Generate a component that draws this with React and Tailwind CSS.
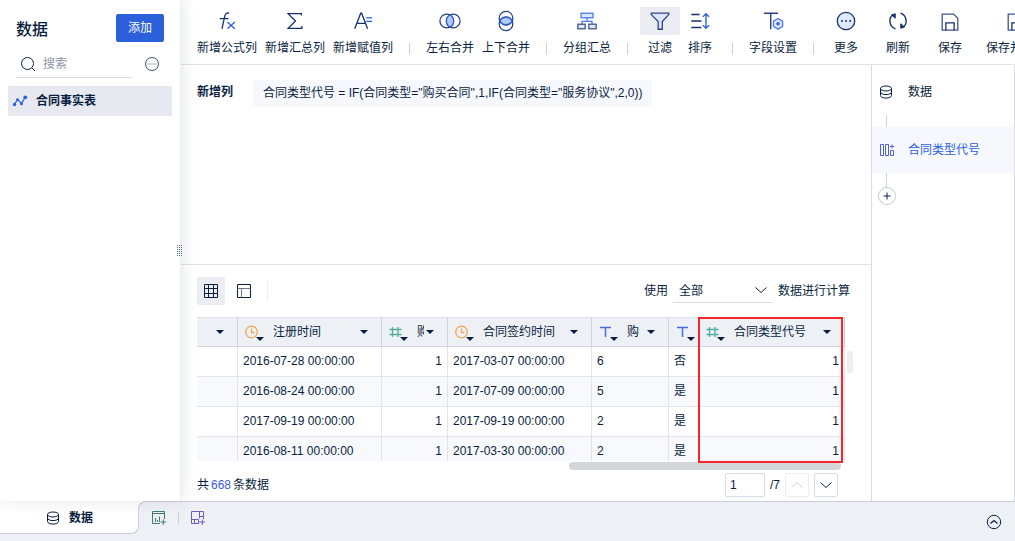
import { useState } from 'react'

const COLUMNS = [
  { key: 'first', width: 'w-[41px]' },
  { key: 'registered', name: '注册时间', type: 'date', width: 'w-[144px]' },
  { key: 'buyCount', name: '购买数量', type: 'number', width: 'w-[66px]' },
  { key: 'signed', name: '合同签约时间', type: 'date', width: 'w-[144px]' },
  { key: 'amount', name: '购', type: 'text', width: 'w-[77px]' },
  { key: 'done', type: 'text', width: 'w-[30px]' },
  { key: 'code', name: '合同类型代号', type: 'number', width: 'w-auto' },
]

const ROWS = [
  { registered: '2016-07-28 00:00:00', buyCount: 1, signed: '2017-03-07 00:00:00', amount: '6', done: '否', code: 1 },
  { registered: '2016-08-24 00:00:00', buyCount: 1, signed: '2017-07-09 00:00:00', amount: '5', done: '是', code: 1 },
  { registered: '2017-09-19 00:00:00', buyCount: 1, signed: '2017-09-19 00:00:00', amount: '2', done: '是', code: 1 },
  { registered: '2016-08-11 00:00:00', buyCount: 1, signed: '2017-03-30 00:00:00', amount: '2', done: '是', code: 1 },
]

const ICONS = {
  formula: (
    <>
      <path d="M14.500 3.500c-3-.8-4.300.4-4.900 3L6.500 20.500M4 9.500h9.500" stroke="#16306b" />
      <path d="M12.500 13l8 7.500m0-7.500l-8 7.500" stroke="#2c60db" />
    </>
  ),
  sum: <path d="M19 6V4h-14.500l8 8-8 8H19.500V17.500" stroke="#16306b" />,
  assign: (
    <>
      <path d="M3 20.500L9.500 3.500h1L17 20.500M5.500 14.500h9.500" stroke="#16306b" />
      <path d="M15.500 8.500h6.500m-6.500 4h6.500" stroke="#2c60db" />
    </>
  ),
  mergeX: (
    <>
      <circle cx="8.500" cy="12" r="7.500" stroke="#2b447f" />
      <circle cx="15.500" cy="12" r="7.500" stroke="#2b447f" />
      <path d="M12 5.400a7.500 7.500 0 0 1 0 13.200a7.500 7.500 0 0 1 0-13.200z" fill="#b3caff" stroke="#2c60db" />
    </>
  ),
  mergeY: (
    <>
      <circle cx="12" cy="9" r="7.500" stroke="#2b447f" />
      <circle cx="12" cy="15" r="7.500" stroke="#2b447f" />
      <path d="M5.400 12a7.500 7.500 0 0 1 13.200 0a7.500 7.500 0 0 1-13.200 0z" fill="#b3caff" stroke="#2c60db" />
    </>
  ),
  group: (
    <>
      <path d="M12 8.500v4M6.500 15.500v-3h11v3" stroke="#4a78e6" />
      <rect x="5.500" y="3.500" width="13" height="5" fill="#dce7ff" stroke="#4a78e6" />
      <rect x="2" y="15.500" width="8" height="5" fill="#dce7ff" stroke="#3c5488" />
      <rect x="14" y="15.500" width="8" height="5" fill="#dce7ff" stroke="#3c5488" />
    </>
  ),
  filter: <path d="M2.500 3.500h19v1.500l-7 7.500v8.500h-4.500v-8.500L2.500 5z" fill="#dce7ff" stroke="#2b447f" />,
  sort: (
    <>
      <path d="M2.500 5h9M2.500 12h11M2.500 19h11" stroke="#16306b" strokeWidth="1.600" />
      <path d="M18.500 4v16M15 7.500l3.500-3.500 3.500 3.500M15 16.500l3.500 3.500 3.500-3.500" stroke="#2c60db" strokeWidth="1.500" />
    </>
  ),
  field: (
    <>
      <path d="M2 3.500h15.500M9.500 3.500v17.500" stroke="#2b447f" strokeWidth="1.600" />
      <path d="M17.500 9.300l5 2.900v5.800l-5 2.900-5-2.900v-5.800z" fill="#dce7ff" stroke="#4a78e6" />
      <circle cx="17.500" cy="15.100" r="1.200" fill="#2c60db" stroke="#2c60db" />
    </>
  ),
  more: (
    <>
      <circle cx="12" cy="12" r="9.500" fill="#dfe9ff" stroke="#16306b" />
      <path d="M7.500 12h.1m4.400 0h.1m4.400 0h.1" stroke="#16306b" strokeWidth="2" strokeLinecap="round" />
    </>
  ),
  refresh: (
    <>
      <path d="M6.500 5a9 9 0 0 0 2.700 15.500M17.500 19a9 9 0 0 0-2.700-15.500" stroke="#16306b" strokeWidth="1.500" />
      <path d="M5 5.500l4-1.500v5zM19 18.500l-4 1.500v-5z" fill="#16306b" stroke="#16306b" strokeWidth="1" />
    </>
  ),
  save: (
    <>
      <path d="M3.500 4.500h12.500l4.500 4.500v13h-17z" stroke="#3c5488" />
      <path d="M7.500 22v-8h9v8" stroke="#16306b" />
    </>
  ),
}

const TOOL_GROUPS = [
  [
    { icon: 'formula', label: '新增公式列' },
    { icon: 'sum', label: '新增汇总列' },
    { icon: 'assign', label: '新增赋值列' },
  ],
  [
    { icon: 'mergeX', label: '左右合并' },
    { icon: 'mergeY', label: '上下合并' },
  ],
  [{ icon: 'group', label: '分组汇总' }],
  [
    { icon: 'filter', label: '过滤', active: true },
    { icon: 'sort', label: '排序' },
  ],
  [{ icon: 'field', label: '字段设置' }],
]

const PAGE_TOOLS = [
  { icon: 'more', label: '更多' },
  { icon: 'refresh', label: '刷新' },
  { icon: 'save', label: '保存' },
  { icon: 'save', label: '保存并更新' },
]

function ToolButton({ icon, label, active }) {
  return (
    <button className="flex flex-col items-center shrink-0 px-1 min-w-10">
      <span
        className={`flex items-center justify-center w-10 h-7 -mx-1 rounded-xs ${
          active ? 'bg-[#ecedf2]' : ''
        }`}
      >
        <svg className="w-[22px] h-[22px]" viewBox="0 0 24 24" fill="none" strokeWidth="1.400">
          {ICONS[icon]}
        </svg>
      </span>
      <span className="pt-px leading-6 whitespace-nowrap">{label}</span>
    </button>
  )
}

function DatabaseIcon() {
  return (
    <svg className="w-3 h-3.5 shrink-0" viewBox="0 0 12 14" fill="none" stroke="#091e40">
      <ellipse cx="6" cy="3.500" rx="5.500" ry="2.500" />
      <path d="M.5 3.500v7c0 3.400 11 3.400 11 0v-7M.5 7c0 3.400 11 3.400 11 0" />
    </svg>
  )
}

function Caret() {
  return (
    <svg className="w-2 h-1 shrink-0" viewBox="0 0 8 4" fill="#091e40">
      <path d="M0 0h8L4 4z" />
    </svg>
  )
}

function TypeIcon({ type }) {
  return (
    <svg className="w-3.5 h-3.5 shrink-0" viewBox="0 0 14 14" fill="none" strokeWidth="1.300">
      {type === 'date' && (
        <g stroke="#f2a654">
          <circle cx="6.500" cy="7" r="5.800" />
          <path d="M6.500 3.500v4h3" />
        </g>
      )}
      {type === 'number' && <path d="M3.500 2v10M9 2v10M.5 4.500h12M.5 9.500h12" stroke="#4fae9e" />}
      {type === 'text' && <path d="M1 2.500h11M6.500 2.500V12" stroke="#4a6be0" strokeWidth="1.500" />}
    </svg>
  )
}

function Chevron({ up, className }) {
  return (
    <svg className={`w-3 h-1.5 ${className || ''}`} viewBox="0 0 12 6" fill="none" stroke="currentColor">
      <path d={up ? 'M.5 5.500L6 .5l5.500 5' : 'M.5.500L6 5.500l5.500-5'} />
    </svg>
  )
}

function Sidebar() {
  return (
    <aside className="relative z-10 w-[181px] shrink-0 bg-white border-r border-[#eff1f4] shadow-[2px_0_14px_rgba(9,30,64,0.1)]">
      <div className="flex items-center justify-between pt-3.5 px-4">
        <h1 className="pt-1 text-base leading-6 font-medium">数据</h1>
        <button className="w-12 h-7 bg-[#2c60db] text-white rounded-xs">添加</button>
      </div>

      <div className="flex items-center justify-between mt-2 pl-4 pr-5">
        <label className="flex items-center w-[116px] h-7 pl-1 border-b border-[#d9dce3]">
          <svg className="w-4 h-4 shrink-0" viewBox="0 0 16 16" fill="none" stroke="#091e40" aria-hidden="true">
            <circle cx="7.500" cy="7.500" r="6" />
            <path d="M12 12l3 3" />
          </svg>
          <input
            type="text"
            aria-label="搜索"
            placeholder="搜索"
            className="w-full min-w-0 ml-[7px] outline-none placeholder:text-[#8c95a6]"
          />
        </label>
        <button aria-label="更多操作">
          <svg className="w-4 h-4" viewBox="0 0 16 16" fill="none" stroke="#3a4b66">
            <circle cx="8" cy="8" r="6.500" />
            <path d="M4.500 8h1.200m1.700 0h1.200m1.700 0h1.200" />
          </svg>
        </button>
      </div>

      <button className="flex items-center w-[164px] h-[30px] mt-2 mx-2 pl-1 gap-2 bg-[#e6e9f0] font-bold">
        <svg className="w-4 h-4" viewBox="0 0 16 16" fill="none" stroke="#2c60db" strokeWidth="1.300">
          <path d="M2.500 11.500l3-5 4 4 3.500-6" />
          <g fill="#2c60db" stroke="none">
            <circle cx="2.500" cy="11.500" r="1.700" />
            <circle cx="5.500" cy="6.500" r="1.300" />
            <circle cx="9.500" cy="10.800" r="1.500" />
            <circle cx="13.300" cy="4.300" r="1.900" />
          </g>
        </svg>
        合同事实表
      </button>

      {/* resize handle */}
      <div className="absolute top-1/2 -right-0.5 grid grid-cols-3 gap-px -translate-y-1.5">
        {Array.from({ length: 18 }, (_, i) => (
          <span key={i} className="w-px h-px bg-[#5b6b86]" />
        ))}
      </div>
    </aside>
  )
}

function Toolbar() {
  return (
    <div className="flex items-start h-[65px] pt-[7px] pl-3 overflow-hidden border-b border-[#e0e3ec]">
      {TOOL_GROUPS.map((group, i) => (
        <div key={i} className="flex items-start shrink-0">
          {group.map((tool) => (
            <ToolButton key={tool.label} {...tool} />
          ))}
          <span className="w-px h-3 mx-3 mt-9 bg-[#cdd1da]" />
        </div>
      ))}
      <div className="flex shrink-0 gap-3">
        {PAGE_TOOLS.map((tool) => (
          <ToolButton key={tool.label} {...tool} />
        ))}
      </div>
    </div>
  )
}

function HeaderCell({ column }) {
  return (
    <div className="flex items-center h-full pl-[7px]">
      {column.type && (
        <button aria-label="字段类型" className="flex items-center shrink-0">
          <TypeIcon type={column.type} />
          <span className="-ml-[3px] pt-3.5">
            <Caret />
          </span>
        </button>
      )}
      {column.name && (
        <span className="flex-1 min-w-0 ml-[9px] mr-0.5 overflow-hidden whitespace-nowrap text-left">
          {column.name}
        </span>
      )}
      {(column.name || !column.type) && (
        <button aria-label="列操作" className="ml-auto mr-[13px] shrink-0">
          <Caret />
        </button>
      )}
    </div>
  )
}

function DataTable() {
  return (
    <div className="relative flex-1 min-w-0">
      <div className="h-36 overflow-hidden">
        <table className="table-fixed w-full border-separate border-spacing-0">
          <colgroup>
            {COLUMNS.map((column) => (
              <col key={column.key} className={column.width} />
            ))}
          </colgroup>
          <thead>
            <tr className="bg-[#edf0f5]">
              {COLUMNS.map((column) => (
                <th
                  key={column.key}
                  className="h-[30px] p-0 font-normal overflow-hidden border-y border-r border-[#cfd4de] border-t-[#dfe3ea]"
                >
                  <HeaderCell column={column} />
                </th>
              ))}
            </tr>
          </thead>
          <tbody>
            {ROWS.map((row, i) => (
              <tr key={i} className={i % 2 ? 'bg-[#f7f9fd]' : 'bg-white'}>
                {COLUMNS.map((column) => (
                  <td
                    key={column.key}
                    className={`h-[30px] px-[5px] pt-0 pb-0.5 whitespace-nowrap overflow-hidden border-b border-r border-[#e1e4ec] ${
                      column.type === 'number' ? 'text-right' : 'text-left'
                    }`}
                  >
                    {row[column.key]}
                  </td>
                ))}
              </tr>
            ))}
          </tbody>
        </table>
      </div>
      {/* highlight on the new column */}
      <div className="absolute top-0 -bottom-0.5 left-[501px] right-0.5 z-10 border-2 border-[#fa2328]" />
    </div>
  )
}

function DataPreview() {
  const [range, setRange] = useState('all')
  const [page, setPage] = useState('1')

  return (
    <section className="pt-3 pb-1 pl-4 pr-[18px] border-t border-[#e0e3ec]">
      <div className="flex items-center pr-[3px]">
        <button aria-label="表格" className="flex items-center justify-center w-7 h-7 rounded-xs bg-[#ecedf2]">
          <svg className="w-4 h-4" viewBox="0 0 16 16" fill="none" stroke="#091e40">
            <path d="M1.500 1.500h13v13h-13zM5.500 1.500v13M10.500 1.500v13M1.500 5.500h13M1.500 10.500h13" />
          </svg>
        </button>
        <button aria-label="字段" className="flex items-center justify-center w-7 h-7 ml-[5px]">
          <svg className="w-4 h-4" viewBox="0 0 16 16" fill="none" stroke="#091e40">
            <path d="M1.500 1.500h13v13h-13z" />
            <path d="M1.500 5.500h13M5.500 5.500v9" stroke="#6b7a90" />
          </svg>
        </button>
        <span className="w-px h-5 ml-[9px] bg-[#eceef3]" />

        <label htmlFor="range" className="ml-auto">使用</label>
        <div className="relative w-[100px] mx-[5px]">
          <select
            id="range"
            value={range}
            onChange={(e) => setRange(e.target.value)}
            className="block appearance-none w-full h-6 pl-1.5 outline-none border-b border-[#d9dce3]"
          >
            <option value="all">全部</option>
            <option value="part">部分</option>
          </select>
          <Chevron className="absolute top-2 right-1.5 pointer-events-none" />
        </div>
        <span>数据进行计算</span>
      </div>

      <div className="flex mt-3">
        <DataTable />
        <div className="w-2 shrink-0 pt-[34px]">
          <div className="w-1.5 h-[22px] ml-auto rounded-sm bg-[#efeff2]" />
        </div>
      </div>
      <div className="flex justify-end pr-3">
        <div className="w-[272px] h-2 mt-px rounded-sm bg-[#d5d6da]" />
      </div>

      <div className="flex items-center justify-between mt-[3px] pr-[15px]">
        <p className="flex gap-0.5">
          共<span className="text-[#3b5bdb]">668</span>条数据
        </p>
        <div className="flex items-center gap-[5px]">
          <input
            type="text"
            aria-label="页码"
            value={page}
            onChange={(e) => setPage(e.target.value)}
            className="w-10 h-6 px-1 border border-[#d9dce3] rounded-xs outline-none"
          />
          <span>/7</span>
          <button
            aria-label="上一页"
            disabled
            className="flex items-center justify-center w-6 h-6 border border-[#eceef2] rounded-xs text-[#cdd1d9]"
          >
            <Chevron up />
          </button>
          <button
            aria-label="下一页"
            className="flex items-center justify-center w-6 h-6 border border-[#d9dce3] rounded-xs"
          >
            <Chevron />
          </button>
        </div>
      </div>
    </section>
  )
}

function Steps() {
  return (
    <aside className="w-36 shrink-0 pt-1 border-x border-[#d9dce6]">
      <button className="flex items-center gap-4 w-full h-[46px] pl-2">
        <DatabaseIcon />
        数据
      </button>
      <div className="w-px h-3 ml-3.5 bg-[#d0d4de]" />
      <button className="flex items-center gap-4 w-full h-[46px] pl-2 bg-[#f7f8fd] text-[#2c60db]">
        <svg className="w-3.5 h-3.5 -mr-0.5" viewBox="0 0 14 14" fill="none" stroke="#4a5fd8">
          <path d="M.5 1.500h3v11h-3zM5.500 1.500h3v11h-3zM10.500 7.500h3v5h-3zM10 3.500h4M12 1.500v4" />
        </svg>
        合同类型代号
      </button>
      <div className="w-px h-3.5 ml-3.5 bg-[#d0d4de]" />
      <button
        aria-label="添加步骤"
        className="flex items-center justify-center w-[18px] h-[18px] ml-1.5 rounded-full border border-[#c5cad6]"
      >
        <svg className="w-2 h-2" viewBox="0 0 8 8" fill="none" stroke="#091e40">
          <path d="M4 .5v7M.5 4h7" />
        </svg>
      </button>
    </aside>
  )
}

function BottomBar() {
  return (
    <footer className="flex h-10 bg-[#edf0f5]">
      <button className="flex items-center justify-center gap-2.5 w-[139px] h-[33px] pt-0.5 pl-0.5 bg-white font-bold border-r border-b border-[#c9cedb] rounded-br-lg">
        <DatabaseIcon />
        数据
      </button>
      <div className="w-2 h-2 -ml-px bg-white">
        <div className="w-full h-full bg-[#edf0f5] border-t border-l border-[#c9cedb] rounded-tl-lg" />
      </div>
      <div className="flex flex-1 justify-between pl-1.5 pr-[13px] border-t border-[#c9cedb]">
        <div className="flex items-center gap-3 h-8">
          <button aria-label="添加组件">
            <svg className="w-3.5 h-3.5" viewBox="0 0 14 14" fill="none" stroke="#3f7a70">
              <path d="M8 12.500H.5v-12h12V8M.5 2.500h12M3.500 7v4M5.500 9v2M7.500 5.500V11M8.500 11h5.500M11.300 8.500v5.500" />
            </svg>
          </button>
          <span className="w-px h-3 bg-[#c9cedb]" />
          <button aria-label="添加仪表板">
            <svg className="w-3.5 h-3.5" viewBox="0 0 14 14" fill="none" stroke="#6a5cb8">
              <path d="M8 12.500H.5V.5h12V8M8.500.5v7M.5 8.500h7v4M8.500 5.500h4M3.500 8.500v4M8.500 11h5.500M11.300 8.500v5.500" />
            </svg>
          </button>
        </div>
        <button aria-label="展开">
          <svg className="w-4 h-4" viewBox="0 0 16 16" fill="none" stroke="#091e40">
            <circle cx="8" cy="8" r="6.700" />
            <path d="M4.500 9.500L8 6.500l3.500 3" strokeWidth="1.300" />
          </svg>
        </button>
      </div>
    </footer>
  )
}

export default function App() {
  return (
    <div className="flex flex-col min-h-screen bg-white text-[#091e40] text-xs font-['Liberation_Sans','Noto_Sans_CJK_SC',sans-serif]">
      <div className="flex flex-1">
        <Sidebar />
        <div className="flex flex-col flex-1 min-w-0">
          <Toolbar />
          <div className="flex flex-1">
            <main className="flex flex-col flex-1 min-w-0">
              <section className="flex items-start flex-1 pt-[15px] pl-4 gap-5">
                <h2 className="leading-6 font-bold">新增列</h2>
                <p className="px-2.5 leading-[26px] bg-[#f7f8fd]">
                  合同类型代号 = IF(合同类型="购买合同",1,IF(合同类型="服务协议",2,0))
                </p>
              </section>
              <DataPreview />
            </main>
            <Steps />
          </div>
        </div>
      </div>
      <BottomBar />
    </div>
  )
}
